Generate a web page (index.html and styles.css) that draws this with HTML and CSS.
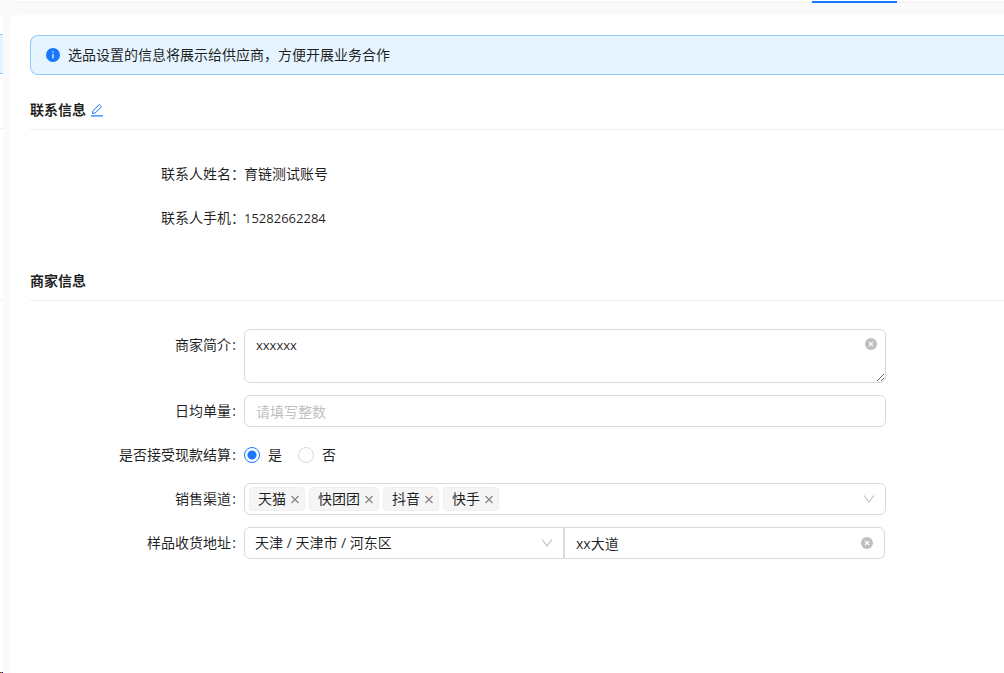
FILE: index.html
```html
<!DOCTYPE html>
<html lang="zh-CN">
<head>
<meta charset="utf-8">
<title>选品设置</title>
<link rel="stylesheet" href="styles.css">
</head>
<body>
<svg class="sprite" aria-hidden="true">
  <symbol id="clear" viewBox="0 0 12 12"><circle cx="6" cy="6" r="6" fill="#bfbfbf"/><path d="M4 4l4 4M8 4l-4 4" stroke="#fff" stroke-width="1.1" fill="none"/></symbol>
  <symbol id="down" viewBox="0 0 12 12"><path d="M1.2 2.5L6 9l4.800-6.500" stroke="#bfbfbf" stroke-width="1.1" fill="none"/></symbol>
  <symbol id="close" viewBox="0 0 10 10"><path d="M1.500 2l7 7M8.500 2l-7 7" stroke="#808080" stroke-width="1.1" fill="none"/></symbol>
</svg>
<div class="app">
  <aside class="side">
    <div class="side-head"></div>
    <div class="side-body">
      <div class="side-alert"></div>
      <div class="side-line side-line-first"></div>
      <div class="side-line side-line-second"></div>
      <div class="side-foot"></div>
    </div>
  </aside>
  <div class="content">
    <nav class="tabs"><span class="ink"></span></nav>
    <main class="panel">
      <div class="alert" role="status">
        <svg class="info" viewBox="0 0 14 14"><circle cx="7" cy="7" r="7" fill="#1677ff"/><path d="M7 6v4.500" stroke="#fff" stroke-width="1.200"/><circle cx="7" cy="4" r=".8" fill="#fff"/></svg>
        <span>选品设置的信息将展示给供应商，方便开展业务合作</span>
      </div>

      <section class="contact">
        <h2 class="title">联系信息
          <button class="icon-btn" type="button" aria-label="编辑"><svg class="edit" viewBox="0 0 14 14" fill="none" stroke="#1677ff"><path d="M1 12.900h12" stroke-width="1.200"/><path d="M2.500 10.500l.5-2.700 6.300-6.300 2.200 2.200-6.300 6.300z" stroke-width="1"/></svg></button>
        </h2>
        <dl class="info-list">
          <div class="row"><dt class="label full">联系人姓名：</dt><dd class="value">育链测试账号</dd></div>
          <div class="row"><dt class="label full">联系人手机：</dt><dd class="value latin">15282662284</dd></div>
        </dl>
      </section>

      <section>
        <h2 class="title">商家信息</h2>
        <form class="form">
          <div class="row">
            <label class="label" for="intro">商家简介<span class="colon">:</span></label>
            <div class="control"><textarea class="field area latin" id="intro">xxxxxx</textarea><button class="icon-btn clear clear-area" type="button" aria-label="清除简介"><svg class="i12"><use href="#clear"/></svg></button></div>
          </div>
          <div class="row">
            <label class="label" for="orders">日均单量<span class="colon">:</span></label>
            <div class="control"><input class="field" id="orders" type="text" placeholder="请填写整数"></div>
          </div>
          <div class="row" role="radiogroup" aria-labelledby="cash">
            <span class="label" id="cash">是否接受现款结算<span class="colon">:</span></span>
            <div class="control radios">
              <label class="radio"><input type="radio" name="cash" checked><span>是</span></label>
              <label class="radio"><input type="radio" name="cash"><span>否</span></label>
            </div>
          </div>
          <div class="row" role="group" aria-labelledby="channel">
            <span class="label" id="channel">销售渠道<span class="colon">:</span></span>
            <div class="control">
              <div class="field tags">
                <span class="tag">天猫<button class="icon-btn" type="button" aria-label="移除天猫"><svg class="i10"><use href="#close"/></svg></button></span>
                <span class="tag">快团团<button class="icon-btn" type="button" aria-label="移除快团团"><svg class="i10"><use href="#close"/></svg></button></span>
                <span class="tag">抖音<button class="icon-btn" type="button" aria-label="移除抖音"><svg class="i10"><use href="#close"/></svg></button></span>
                <span class="tag">快手<button class="icon-btn" type="button" aria-label="移除快手"><svg class="i10"><use href="#close"/></svg></button></span>
                <button class="icon-btn open" type="button" aria-label="展开"><svg class="i12"><use href="#down"/></svg></button>
              </div>
            </div>
          </div>
          <div class="row">
            <label class="label" for="region">样品收货地址<span class="colon">:</span></label>
            <div class="control address">
              <div class="part part-region"><select class="field region" id="region"><option>天津 / 天津市 / 河东区</option></select><svg class="i12 arrow"><use href="#down"/></svg></div>
              <div class="part"><input class="field street" type="text" value="xx大道" aria-label="详细地址"><button class="icon-btn clear clear-street" type="button" aria-label="清除地址"><svg class="i12"><use href="#clear"/></svg></button></div>
            </div>
          </div>
        </form>
      </section>
    </main>
  </div>
</div>
</body>
</html>
```
FILE: styles.css
```css
* { box-sizing: border-box; }

body {
  margin: 0;
  background: #fafafa;
  color: rgba(0, 0, 0, 0.88);
  font: 14px/22px "Open Sans", "Noto Sans CJK SC", sans-serif;
}

.sprite { position: absolute; width: 0; height: 0; }
.app { display: flex; min-height: 100vh; overflow: hidden; }

.side { display: flex; flex-direction: column; width: 3px; }
.side-head { height: 2px; background: #fff; border-bottom: 1px solid #f0f0f0; }
.side-body { display: flex; flex: 1; flex-direction: column; margin-top: 12px; padding-top: 20px; background: #fff; }
.side-alert { height: 40px; background: #e6f4ff; border: solid #91caff; border-width: 1px 0; }
.side-line { height: 1px; background: #f0f0f0; }
.side-line-first { margin-top: 54px; }
.side-line-second { margin-top: 170px; }
.side-foot { height: 1px; margin-top: auto; background: linear-gradient(90deg, #f00 33%, #0c4 33% 66%, #00f 66%); }

.content { display: flex; flex: 1; flex-direction: column; min-width: 0; }
.tabs { display: flex; height: 3px; margin-left: 11px; background: #fff; border-bottom: 1px solid #f0f0f0; }
.ink { width: 85px; height: 2px; margin: 1px 107px 0 auto; background: #1677ff; }

.panel { flex: 1; margin: 12px 0 0 7px; padding: 20px 0 20px 20px; background: #fff; border-radius: 8px 0 0; }

.alert {
  display: flex;
  align-items: center;
  gap: 8px;
  height: 40px;
  padding-left: 15px;
  background: #e6f4ff;
  border: 1px solid #91caff;
  border-right: 0;
  border-radius: 8px 0 0 8px;
}
.info { width: 14px; height: 14px; }

.icon-btn { display: inline-flex; padding: 0; border: 0; background: none; cursor: pointer; }
.i10 { width: 10px; height: 10px; }
.i12 { width: 12px; height: 12px; }
.edit { width: 14px; height: 14px; }

.title {
  display: flex;
  align-items: center;
  gap: 4px;
  margin: 0;
  padding: 24px 0 8px;
  border-bottom: 1px solid #f0f0f0;
  font-size: 14px;
  font-weight: 600;
}

.info-list { display: grid; gap: 12px; margin: 28px 0 12px; }
.row { display: grid; grid-template-columns: 214px minmax(0, 642px); align-items: start; }
.label { line-height: 32px; text-align: right; white-space: nowrap; }
.label.full { margin-right: -1px; }
.colon { display: inline-block; width: 4px; margin: 0 8px 0 1px; }
.value { margin: 0; line-height: 32px; }
.latin { font-size: 13px; }

.form { display: grid; gap: 12px; padding-top: 28px; }
.control { position: relative; display: flex; min-width: 0; }

.field {
  width: 100%;
  height: 32px;
  padding: 4px 11px;
  background: #fff;
  border: 1px solid #d9d9d9;
  border-radius: 6px;
  color: inherit;
  font: inherit;
  outline: 0;
}
.field::placeholder { color: #bfbfbf; }
.area { height: 54px; resize: vertical; font-size: 13px; }
.clear { position: absolute; }
.clear-area { top: 9px; right: 9px; }
.clear-street { top: 10px; right: 12px; }

.radios { gap: 16px; height: 32px; }
.radio { display: flex; align-items: center; gap: 8px; }
.radio input {
  width: 16px;
  height: 16px;
  margin: 0;
  appearance: none;
  border: 1px solid #d9d9d9;
  border-radius: 50%;
}
.radio input:checked { border-color: #1677ff; background: radial-gradient(circle, #1677ff 4px, #fff 5px); }

.tags { display: flex; align-items: center; gap: 4px; padding: 0 10px 0 4px; }
.tag {
  display: flex;
  align-items: center;
  gap: 4px;
  height: 24px;
  padding: 0 4px 0 8px;
  background: #f5f5f5;
  border: 1px solid #f0f0f0;
  border-radius: 4px;
}
.open { margin-left: auto; }

.address { margin-right: 1px; }
.part { position: relative; flex: 1; min-width: 0; }
.part-region { flex: 0 1 320px; }
.region { appearance: none; padding-left: 10px; border-radius: 6px 0 0 6px; }
.street { border-radius: 0 6px 6px 0; }
.arrow { position: absolute; top: 10px; right: 11px; pointer-events: none; }
```
